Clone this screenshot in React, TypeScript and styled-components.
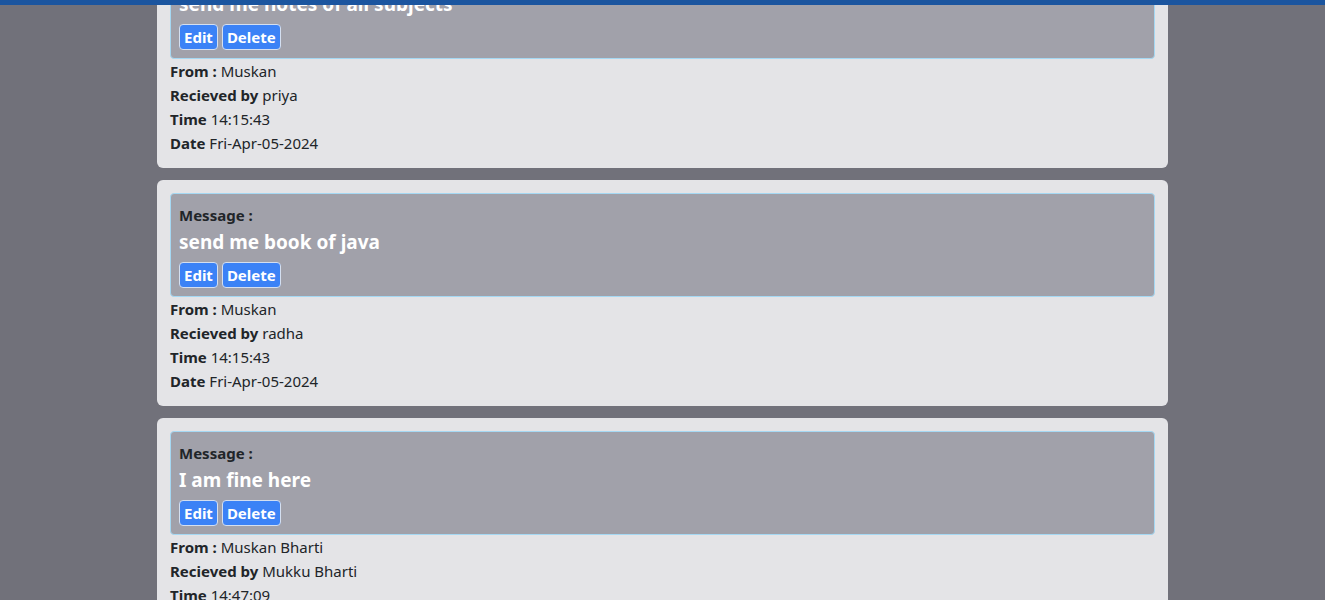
import React from "react";
import styled, { createGlobalStyle } from "styled-components";

const GlobalStyle = createGlobalStyle`
  html, body {
    margin: 0;
    padding: 0;
    background: #71717a;
    font-family: "Noto Sans", "Open Sans", sans-serif;
    color: #212529;
    overflow: hidden;
  }
  * { box-sizing: border-box; }
`;

const TopBar = styled.div`
  position: fixed;
  top: 0;
  left: 0;
  right: 0;
  height: 5px;
  background: #1b559f;
  z-index: 10;
`;

const Page = styled.main`
  height: 600px;
  overflow: hidden;
`;

const List = styled.div`
  width: 1011px;
  margin: -58px auto 0;
  display: flex;
  flex-direction: column;
  gap: 12px;
`;

const Card = styled.section`
  background: #e4e4e7;
  border-radius: 6px;
  padding: 13px;
`;

const MessageBox = styled.div`
  background: #a1a1aa;
  border: 1px solid #a5d8f3;
  border-radius: 4px;
  padding: 9px 8px 8px;
`;

const Label = styled.div`
  font-size: 15px;
  font-weight: 700;
  line-height: 24px;
  color: #212529;
`;

const Title = styled.div`
  font-size: 19px;
  font-weight: 700;
  line-height: 30px;
  color: #ffffff;
`;

const Actions = styled.div`
  display: flex;
  gap: 4px;
  margin-top: 5px;
`;

const Button = styled.button`
  font-family: inherit;
  font-size: 15px;
  font-weight: 700;
  line-height: 22px;
  height: 26px;
  padding: 0 4px;
  color: #ffffff;
  background: #3b82f6;
  border: 1px solid #d4dff0;
  border-radius: 4px;
  cursor: pointer;
`;

const Row = styled.div`
  font-size: 15px;
  line-height: 24px;
  color: #212529;
  & > b {
    font-weight: 700;
  }
`;

type Msg = {
  text: string;
  from: string;
  to: string;
  time: string;
  date: string;
};

const messages: Msg[] = [
  { text: "send me notes of all subjects", from: "Muskan", to: "priya", time: "14:15:43", date: "Fri-Apr-05-2024" },
  { text: "send me book of java", from: "Muskan", to: "radha", time: "14:15:43", date: "Fri-Apr-05-2024" },
  { text: "I am fine here", from: "Muskan Bharti", to: "Mukku Bharti", time: "14:47:09", date: "Fri-Apr-05-2024" },
];

export default function App() {
  return (
    <>
      <GlobalStyle />
      <TopBar />
      <Page>
        <List>
          {messages.map((m, i) => (
            <Card key={i}>
              <MessageBox>
                <Label>Message :</Label>
                <Title>{m.text}</Title>
                <Actions>
                  <Button>Edit</Button>
                  <Button>Delete</Button>
                </Actions>
              </MessageBox>
              <Row><b>From :</b> {m.from}</Row>
              <Row><b>Recieved by</b> {m.to}</Row>
              <Row><b>Time</b> {m.time}</Row>
              <Row><b>Date</b> {m.date}</Row>
            </Card>
          ))}
        </List>
      </Page>
    </>
  );
}
